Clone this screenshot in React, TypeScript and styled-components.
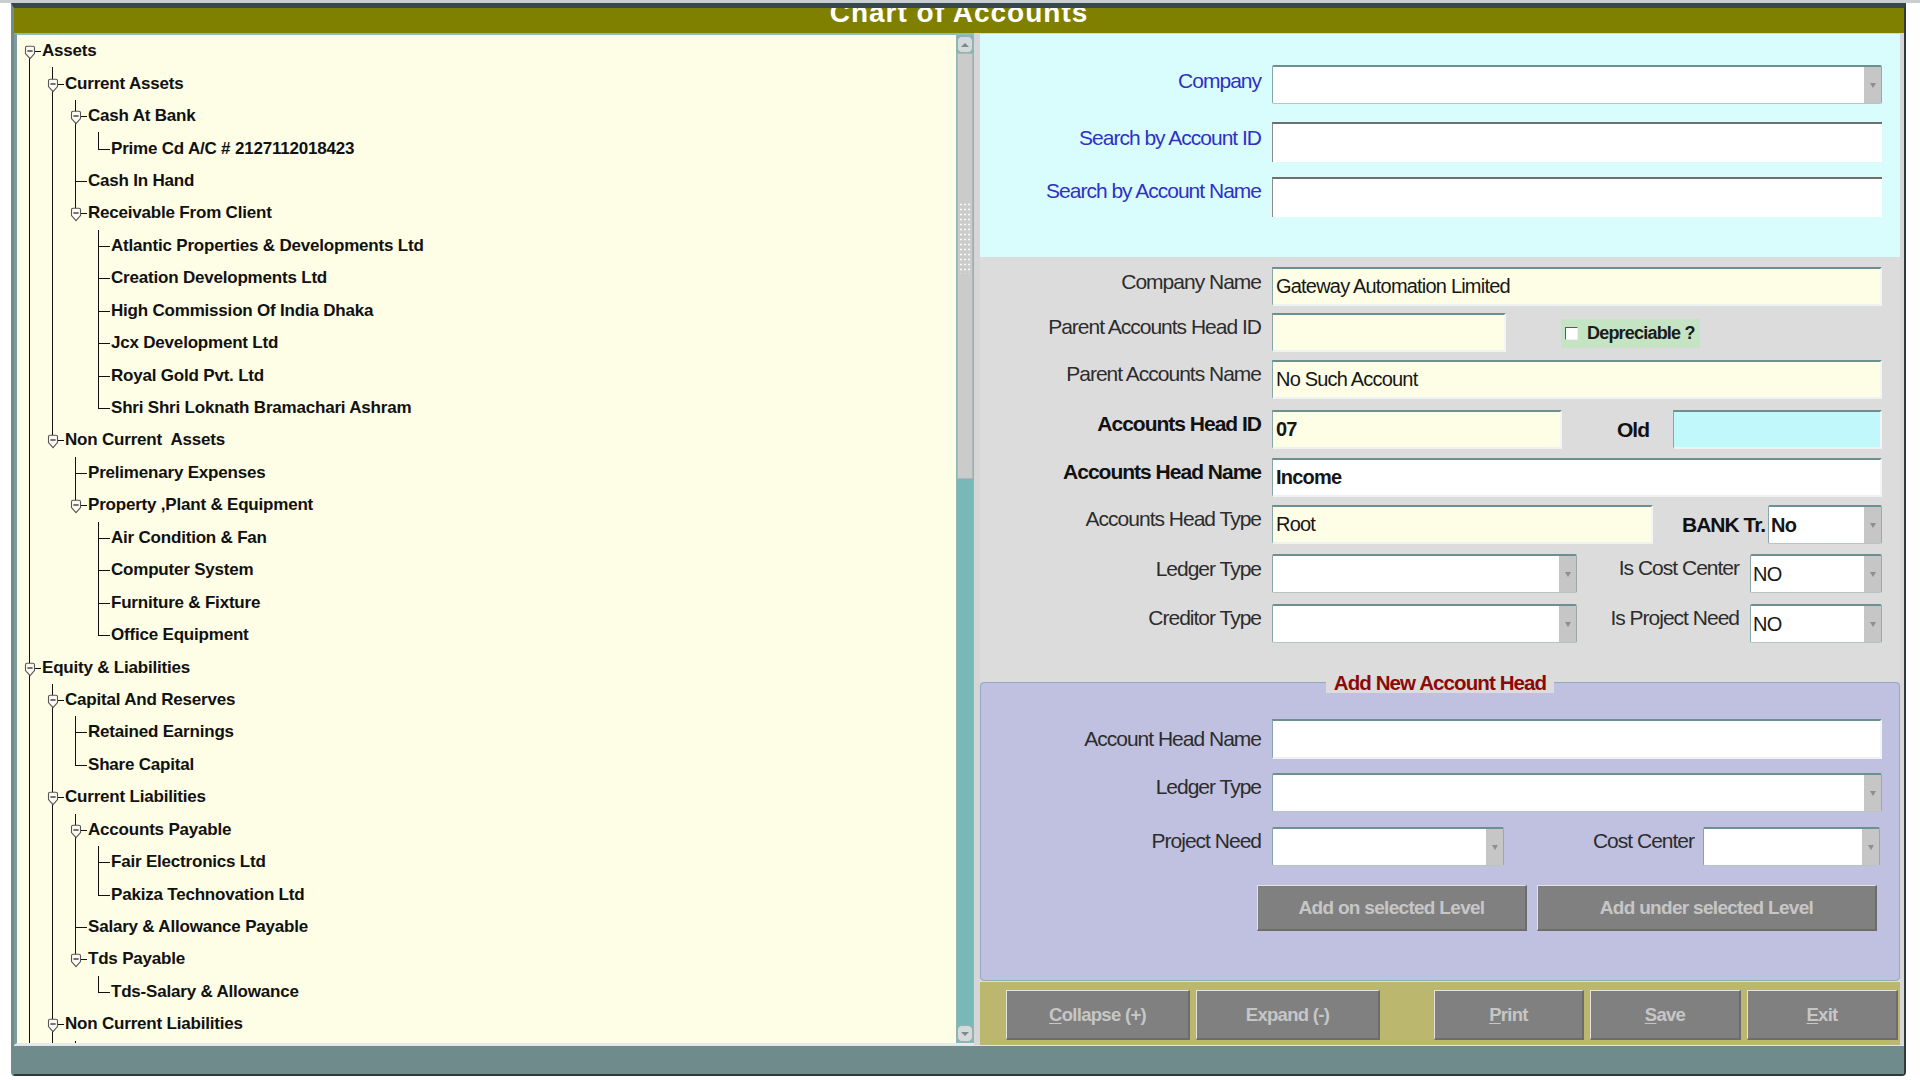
import React from 'react';
import styled, { createGlobalStyle } from 'styled-components';

const SANS = `"Liberation Sans", Arial, sans-serif`;

type TreeNode = { name: string; children?: TreeNode[] };

const TREE: TreeNode[] = [
  {
    name: 'Assets',
    children: [
      {
        name: 'Current Assets',
        children: [
          { name: 'Cash At Bank', children: [{ name: 'Prime Cd A/C # 2127112018423' }] },
          { name: 'Cash In Hand' },
          {
            name: 'Receivable From Client',
            children: [
              { name: 'Atlantic Properties & Developments Ltd' },
              { name: 'Creation Developments Ltd' },
              { name: 'High Commission Of India Dhaka' },
              { name: 'Jcx Development Ltd' },
              { name: 'Royal Gold Pvt. Ltd' },
              { name: 'Shri Shri Loknath Bramachari Ashram' },
            ],
          },
        ],
      },
      {
        name: 'Non Current  Assets',
        children: [
          { name: 'Prelimenary Expenses' },
          {
            name: 'Property ,Plant & Equipment',
            children: [
              { name: 'Air Condition & Fan' },
              { name: 'Computer System' },
              { name: 'Furniture & Fixture' },
              { name: 'Office Equipment' },
            ],
          },
        ],
      },
    ],
  },
  {
    name: 'Equity & Liabilities',
    children: [
      {
        name: 'Capital And Reserves',
        children: [{ name: 'Retained Earnings' }, { name: 'Share Capital' }],
      },
      {
        name: 'Current Liabilities',
        children: [
          {
            name: 'Accounts Payable',
            children: [{ name: 'Fair Electronics Ltd' }, { name: 'Pakiza Technovation Ltd' }],
          },
          { name: 'Salary & Allowance Payable' },
          { name: 'Tds Payable', children: [{ name: 'Tds-Salary & Allowance' }] },
        ],
      },
      {
        name: 'Non Current Liabilities',
        children: [{ name: 'Long Term Loan' }],
      },
      { name: 'Share Holders Equity' },
    ],
  },
  { name: 'Income' },
];

type FlatRow = {
  name: string;
  guides: boolean[];
  up: boolean;
  down: boolean;
  open: boolean;
};

// walk the tree and remember, for every ancestor level, whether its line keeps going
const flatten = (nodes: TreeNode[], guides: boolean[], out: FlatRow[]) => {
  nodes.forEach((node, i) => {
    const last = i === nodes.length - 1;
    out.push({
      name: node.name,
      guides,
      up: !(guides.length === 0 && i === 0),
      down: !last,
      open: !!node.children,
    });
    if (node.children) flatten(node.children, [...guides, !last], out);
  });
  return out;
};

// only the rows that fit in the panel (the last one shows just its line stubs)
const ROWS = flatten(TREE, [], []).slice(0, 32);

const ExpandIcon = () => (
  <IconSvg width="12" height="15" viewBox="0 0 12 15">
    <path
      d="M1.5 2.8 Q1.5 1.2 3.1 1.2 H8.9 Q10.5 1.2 10.5 2.8 V8.6 L6 13.6 L1.5 8.6 Z"
      fill="#fbfbf3"
      stroke="#555555"
      strokeWidth="1.1"
    />
    <path d="M3.4 6 H8.6" stroke="#2c2c2c" strokeWidth="1.3" />
  </IconSvg>
);

const Combo = ({ w, value, bold }: { w?: number; value?: string; bold?: boolean }) => (
  <ComboBox $w={w}>
    <FieldText $bold={bold}>{value}</FieldText>
    <DropButton>
      <CaretShape />
    </DropButton>
  </ComboBox>
);

const App = () => {
  return (
    <Screen>
      <GlobalStyle />
      <Window>
        <TitleBar>
          <Title>Chart of Accounts</Title>
        </TitleBar>
        <Body>
          <TreePanel>
            <TreeBody>
              {ROWS.map((row, i) => (
                <TreeRow key={i}>
                  {row.guides.map((on, j) => (
                    <Guide key={j} $on={on} />
                  ))}
                  <Joint $up={row.up} $down={row.down}>
                    {row.open && <ExpandIcon />}
                  </Joint>
                  <NodeLabel>{row.name}</NodeLabel>
                </TreeRow>
              ))}
            </TreeBody>
            <ScrollBar>
              <ScrollArrow>
                <ArrowUp />
              </ScrollArrow>
              <Thumb>
                <Grip />
              </Thumb>
              <Track />
              <ScrollArrow>
                <ArrowDown />
              </ScrollArrow>
            </ScrollBar>
          </TreePanel>

          <FormPanel>
            <SearchSection>
              <FormRow $pl={11} $mt={31}>
                <Label $tone="blue" $pt={2}>Company</Label>
                <FieldArea>
                  <Combo />
                </FieldArea>
              </FormRow>
              <FormRow $pl={11} $mt={18}>
                <Label $tone="blue" $pt={2}>Search by Account ID</Label>
                <FieldArea>
                  <SearchInput />
                </FieldArea>
              </FormRow>
              <FormRow $pl={11} $mt={15}>
                <Label $tone="blue" $pt={0}>Search by Account Name</Label>
                <FieldArea>
                  <SearchInput />
                </FieldArea>
              </FormRow>
            </SearchSection>

            <DetailSection>
              <FormRow $pl={11} $mt={10}>
                <Label $pt={1}>Company Name</Label>
                <FieldArea>
                  <Field $bg="#fefee6">
                    <FieldText>Gateway Automation Limited</FieldText>
                  </Field>
                </FieldArea>
              </FormRow>
              <FormRow $pl={11} $mt={7}>
                <Label $pt={0}>Parent Accounts Head ID</Label>
                <FieldArea>
                  <Field $bg="#fefee6" $w={234} />
                  <CheckGroup>
                    <CheckBox />
                    <CheckText>Depreciable ?</CheckText>
                  </CheckGroup>
                </FieldArea>
              </FormRow>
              <FormRow $pl={11} $mt={8}>
                <Label $pt={0}>Parent Accounts Name</Label>
                <FieldArea>
                  <Field $bg="#fefee6">
                    <FieldText>No Such Account</FieldText>
                  </Field>
                </FieldArea>
              </FormRow>
              <FormRow $pl={11} $mt={11}>
                <Label $tone="bold" $pt={0}>Accounts Head ID</Label>
                <FieldArea>
                  <Field $bg="#fefee6" $w={290}>
                    <FieldText $bold>07</FieldText>
                  </Field>
                  <SideLabel $w={111} $align="center" $pl={31} $bold>Old</SideLabel>
                  <Field $bg="#c0f8fc" $w={209} />
                </FieldArea>
              </FormRow>
              <FormRow $pl={11} $mt={9}>
                <Label $tone="bold" $pt={0}>Accounts Head Name</Label>
                <FieldArea>
                  <Field $bg="#ffffff">
                    <FieldText $bold>Income</FieldText>
                  </Field>
                </FieldArea>
              </FormRow>
              <FormRow $pl={11} $mt={8}>
                <Label $pt={0}>Accounts Head Type</Label>
                <FieldArea>
                  <Field $bg="#fefee6" $w={381}>
                    <FieldText>Root</FieldText>
                  </Field>
                  <SideLabel $w={115} $align="right" $pr={3} $bold>BANK Tr.</SideLabel>
                  <Combo w={114} value="No" bold />
                </FieldArea>
              </FormRow>
              <FormRow $pl={11} $mt={10}>
                <Label $pt={1}>Ledger Type</Label>
                <FieldArea>
                  <Combo w={305} />
                  <SideLabel $w={173} $align="right" $pr={11} $top>Is Cost Center</SideLabel>
                  <Combo w={132} value="NO" />
                </FieldArea>
              </FormRow>
              <FormRow $pl={11} $mt={11}>
                <Label $pt={0}>Creditor Type</Label>
                <FieldArea>
                  <Combo w={305} />
                  <SideLabel $w={173} $align="right" $pr={11} $top>Is Project Need</SideLabel>
                  <Combo w={132} value="NO" />
                </FieldArea>
              </FormRow>
            </DetailSection>

            <GroupWrap>
              <GroupBox>
                <GroupTitle>Add New Account Head</GroupTitle>
                <FormRow $pl={10} $mt={26}>
                  <Label $pt={6}>Account Head Name</Label>
                  <FieldArea>
                    <Field $bg="#ffffff" $h={40} />
                  </FieldArea>
                </FormRow>
                <FormRow $pl={10} $mt={14}>
                  <Label $pt={0}>Ledger Type</Label>
                  <FieldArea>
                    <Combo />
                  </FieldArea>
                </FormRow>
                <FormRow $pl={10} $mt={15}>
                  <Label $pt={0}>Project Need</Label>
                  <FieldArea>
                    <Combo w={232} />
                    <SideLabel $w={199} $align="right" $pr={9} $top>Cost Center</SideLabel>
                    <Combo w={177} />
                  </FieldArea>
                </FormRow>
                <ActionRow>
                  <GrayButton $w={270} $h={46} $size={19}>Add on selected Level</GrayButton>
                  <GrayButton $w={340} $h={46} $size={19}>Add under selected Level</GrayButton>
                </ActionRow>
              </GroupBox>
            </GroupWrap>

            <ButtonBar>
              <GrayButton $w={184} $h={50} $size={18.5}>
                <u>C</u>ollapse (+)
              </GrayButton>
              <GrayButton $w={184} $h={50} $size={18.5}>
                Expand (-)
              </GrayButton>
              <GrayButton $w={150} $h={50} $size={18.5} $ml={48}>
                <u>P</u>rint
              </GrayButton>
              <GrayButton $w={151} $h={50} $size={18.5}>
                <u>S</u>ave
              </GrayButton>
              <GrayButton $w={151} $h={50} $size={18.5}>
                <u>E</u>xit
              </GrayButton>
            </ButtonBar>
          </FormPanel>
        </Body>
        <StatusBar />
      </Window>
    </Screen>
  );
};

const GlobalStyle = createGlobalStyle`
  html, body {
    margin: 0;
    padding: 0;
    background: #ffffff;
  }
  body {
    font-family: ${SANS};
  }
  #root {
    width: 1920px;
    height: 1080px;
    overflow: hidden;
  }
`;

const Screen = styled.div`
  width: 1920px;
  height: 1080px;
  box-sizing: border-box;
  border-top: 3px solid #c9ced1;
  background: #ffffff;
`;

const Window = styled.div`
  margin-left: 11px;
  width: 1895px;
  box-sizing: border-box;
  display: flex;
  flex-direction: column;
  border-top: 5px solid #37484c;
  border-left: 3px solid #6f8b8b;
  border-right: 2px solid #2d3a3c;
  border-bottom: 2px solid #2d3a3c;
  border-radius: 0 0 4px 4px;
  background: #d6d6d6;
`;

const TitleBar = styled.div`
  height: 25px;
  background: #808000;
  display: flex;
  justify-content: center;
  align-items: flex-start;
  overflow: hidden;
`;

const Title = styled.h1`
  margin: -9px 0 0 0;
  font-family: ${SANS};
  font-size: 28px;
  font-weight: 700;
  line-height: 28px;
  letter-spacing: 1px;
  color: #ffffff;
`;

const Body = styled.div`
  height: 1012px;
  display: flex;
`;

const TreePanel = styled.div`
  width: 960px;
  flex: none;
  display: flex;
  box-sizing: border-box;
  border-top: 2px solid #8cbcbc;
  border-left: 3px solid #7d9d9d;
  border-bottom: 2px solid #e6eaea;
`;

const TreeBody = styled.div`
  flex: 1;
  overflow: hidden;
  background: #fefee6;
  padding-left: 1px;
`;

const TreeRow = styled.div`
  height: 32.45px;
  display: flex;
  align-items: center;
`;

const Guide = styled.span<{ $on: boolean }>`
  position: relative;
  flex: none;
  width: 23px;
  align-self: stretch;
  &::before {
    content: '';
    display: ${p => (p.$on ? 'block' : 'none')};
    position: absolute;
    left: 11px;
    top: 0;
    bottom: 0;
    width: 1px;
    background: #111;
  }
`;

const Joint = styled.span<{ $up: boolean; $down: boolean }>`
  position: relative;
  flex: none;
  width: 23px;
  align-self: stretch;
  display: flex;
  align-items: center;
  &::before {
    content: '';
    position: absolute;
    left: 11px;
    width: 1px;
    top: ${p => (p.$up ? '0' : '50%')};
    bottom: ${p => (p.$down ? '0' : '50%')};
    background: #111;
  }
  &::after {
    content: '';
    position: absolute;
    left: 11px;
    right: 0;
    top: 50%;
    height: 1px;
    background: #111;
  }
`;

const IconSvg = styled.svg`
  position: relative;
  z-index: 1;
  margin-left: 6px;
  margin-top: 3px;
`;

const NodeLabel = styled.span`
  padding-left: 1px;
  font-family: ${SANS};
  font-size: 17px;
  font-weight: 700;
  letter-spacing: -0.2px;
  color: #111111;
  white-space: pre;
`;

const ScrollBar = styled.div`
  width: 18px;
  flex: none;
  display: flex;
  flex-direction: column;
  box-sizing: border-box;
  border: 1px solid #8fb5b5;
  background: #79b8b8;
`;

const ScrollArrow = styled.div`
  height: 17px;
  flex: none;
  box-sizing: border-box;
  display: flex;
  align-items: center;
  justify-content: center;
  background: #d4dada;
  border: 1px solid #98b0b0;
  border-radius: 5px;
`;

const ArrowUp = styled.span`
  width: 0;
  height: 0;
  border-left: 4px solid transparent;
  border-right: 4px solid transparent;
  border-bottom: 4px solid #7c8a8a;
`;

const ArrowDown = styled(ArrowUp)`
  border-bottom: none;
  border-top: 4px solid #7c8a8a;
`;

const Thumb = styled.div`
  height: 426px;
  flex: none;
  box-sizing: border-box;
  background: #cbcbcb;
  border: 1px solid #a9b9b9;
  display: flex;
  justify-content: center;
  padding-top: 148px;
`;

const Grip = styled.div`
  width: 12px;
  height: 72px;
  background-image: radial-gradient(circle, #ffffff 0.9px, transparent 1.2px);
  background-size: 4px 5px;
  opacity: 0.9;
`;

const Track = styled.div`
  flex: 1;
  background: #79b8b8;
`;

const FormPanel = styled.div`
  width: 920px;
  margin-left: 6px;
  flex: none;
  display: flex;
  flex-direction: column;
`;

const SearchSection = styled.section`
  margin-top: 1px;
  height: 223px;
  background: #d9fdfd;
  display: flex;
  flex-direction: column;
`;

const DetailSection = styled.section`
  height: 415px;
  background: #dcdcdc;
  display: flex;
  flex-direction: column;
`;

const FormRow = styled.div<{ $pl: number; $mt: number }>`
  display: grid;
  grid-template-columns: 270px 610px;
  column-gap: 11px;
  align-items: start;
  padding-left: ${p => p.$pl}px;
  margin-top: ${p => p.$mt}px;
`;

// the form face is a condensed sans: a larger size pulled together keeps its tall look
const Label = styled.label<{ $tone?: 'blue' | 'bold'; $pt: number }>`
  padding-top: ${p => p.$pt}px;
  text-align: right;
  white-space: nowrap;
  font-family: ${SANS};
  font-size: 21px;
  line-height: 28px;
  letter-spacing: -1px;
  font-weight: ${p => (p.$tone === 'bold' ? 700 : 400)};
  color: ${p => (p.$tone === 'blue' ? '#3030c6' : p.$tone === 'bold' ? '#111111' : '#2c2c2c')};
`;

const FieldArea = styled.div`
  display: flex;
  align-items: flex-start;
`;

const Field = styled.div<{ $bg: string; $w?: number; $h?: number }>`
  box-sizing: border-box;
  ${p => (p.$w ? `width: ${p.$w}px; flex: none;` : 'flex: 1;')}
  height: ${p => p.$h ?? 39}px;
  background: ${p => p.$bg};
  border-style: solid;
  border-width: 2px 2px 2px 1px;
  border-color: #6c8f90 #f3f6f6 #eef2f2 #87a6a7;
  display: flex;
  align-items: center;
  padding-left: 1px;
  overflow: hidden;
`;

const SearchInput = styled.div`
  flex: 1;
  height: 40px;
  box-sizing: border-box;
  background: #ffffff;
  border-top: 2px solid #6f6f6f;
  border-left: 1px solid #8a8a8a;
`;

const FieldText = styled.span<{ $bold?: boolean }>`
  flex: 1;
  padding-left: 2px;
  font-family: ${SANS};
  font-size: 20px;
  letter-spacing: -0.8px;
  font-weight: ${p => (p.$bold ? 700 : 400)};
  color: #161616;
  white-space: nowrap;
`;

const ComboBox = styled.div<{ $w?: number }>`
  box-sizing: border-box;
  ${p => (p.$w ? `width: ${p.$w}px; flex: none;` : 'flex: 1;')}
  height: 39px;
  background: #ffffff;
  display: flex;
  align-items: center;
  border-style: solid;
  border-width: 2px 1px 1px 1px;
  border-color: #6c8f90 #9aa8a8 #b8c4c4 #87a6a7;
  border-radius: 2px;
`;

const DropButton = styled.span`
  align-self: stretch;
  width: 17px;
  flex: none;
  background: #c6c6c6;
  display: flex;
  align-items: center;
  justify-content: center;
`;

const CaretShape = styled.span`
  width: 0;
  height: 0;
  border-left: 3.5px solid transparent;
  border-right: 3.5px solid transparent;
  border-top: 5px solid #8e8e8e;
`;

const SideLabel = styled.span<{
  $w: number;
  $align: 'center' | 'right';
  $pl?: number;
  $pr?: number;
  $bold?: boolean;
  $top?: boolean;
}>`
  width: ${p => p.$w}px;
  flex: none;
  box-sizing: border-box;
  padding-left: ${p => p.$pl ?? 0}px;
  padding-right: ${p => p.$pr ?? 0}px;
  text-align: ${p => p.$align};
  align-self: ${p => (p.$top ? 'flex-start' : 'center')};
  white-space: nowrap;
  font-family: ${SANS};
  font-size: 21px;
  line-height: 28px;
  letter-spacing: -1px;
  font-weight: ${p => (p.$bold ? 700 : 400)};
  color: ${p => (p.$bold ? '#111111' : '#2c2c2c')};
`;

const CheckGroup = styled.span`
  margin-left: 55px;
  margin-top: 6px;
  width: 139px;
  height: 29px;
  background: #c4e4c4;
  display: flex;
  align-items: center;
  padding-left: 4px;
  box-sizing: border-box;
  white-space: nowrap;
`;

const CheckBox = styled.span`
  width: 13px;
  height: 13px;
  flex: none;
  box-sizing: border-box;
  background: #ffffff;
  border-style: solid;
  border-width: 1px;
  border-color: #5a5a5a #f0f0f0 #f0f0f0 #5a5a5a;
`;

const CheckText = styled.span`
  margin-left: 9px;
  font-family: ${SANS};
  font-size: 18px;
  letter-spacing: -0.8px;
  font-weight: 700;
  color: #1c1c1c;
`;

const GroupWrap = styled.div`
  height: 309px;
  background: #dcdcdc;
`;

const GroupBox = styled.fieldset`
  margin: 0;
  padding: 0;
  min-width: 0;
  height: 309px;
  box-sizing: border-box;
  background: #c0c0e0;
  border: 1px solid #8fabc0;
  border-radius: 4px;
`;

const GroupTitle = styled.legend`
  margin: 0 auto;
  padding: 0 8px;
  background: #dcdcdc;
  font-family: ${SANS};
  font-size: 20.5px;
  letter-spacing: -0.9px;
  line-height: 21px;
  font-weight: 700;
  color: #8a0a0a;
`;

const ActionRow = styled.div`
  display: flex;
  gap: 10px;
  margin-top: 19px;
  padding-left: 276px;
`;

const GrayButton = styled.button<{ $w: number; $h: number; $size: number; $ml?: number }>`
  width: ${p => p.$w}px;
  height: ${p => p.$h}px;
  margin: 0 0 0 ${p => p.$ml ?? 0}px;
  padding: 0;
  flex: none;
  box-sizing: border-box;
  background: #808080;
  border-style: solid;
  border-width: 1px 2px 2px 1px;
  border-color: #e2e2e2 #6c6c6c #6c6c6c #e2e2e2;
  font-family: ${SANS};
  font-size: ${p => p.$size}px;
  letter-spacing: -0.7px;
  font-weight: 700;
  color: #c6c6c6;
  cursor: default;
  u {
    text-decoration-thickness: 1px;
    text-underline-offset: 2px;
  }
`;

const ButtonBar = styled.div`
  height: 64px;
  box-sizing: border-box;
  background: #bcb76e;
  border-top: 1px solid #e4e0b0;
  display: flex;
  align-items: flex-start;
  gap: 6px;
  padding: 8px 0 0 26px;
`;

const StatusBar = styled.div`
  height: 28px;
  background: #6f8b8b;
  border-top: 1px solid #dfe6e6;
`;

export default App;
